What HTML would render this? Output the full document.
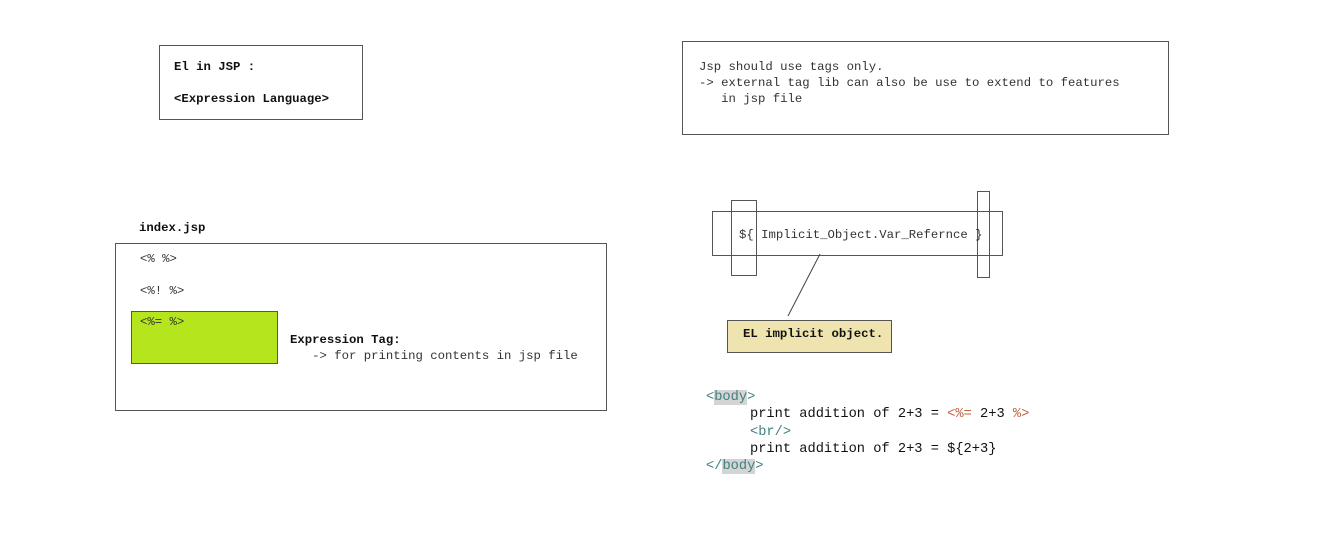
<!DOCTYPE html>
<html><head><meta charset="utf-8"><style>
body{margin:0;width:1339px;height:552px;background:#fff;position:relative;overflow:hidden;font-family:"Liberation Mono",monospace;font-size:12.3px;color:#333}
.b{position:absolute;border:1px solid #555;box-sizing:border-box}
.t{position:absolute;white-space:pre;line-height:16px}
.bold{font-weight:bold;color:#111}
.c{position:absolute;white-space:pre;font-size:13.7px;line-height:17.3px;color:#111;left:706px;top:389px}
.tg{color:#3f7f7f}.hl{background:#d4d4d4}.sc{color:#bf5f3f}
.in{display:inline-block;width:44px}
</style></head><body>
<div class="b" style="left:159px;top:45px;width:204px;height:75px"></div>
<div class="t bold" style="left:174px;top:59px">El in JSP :

&lt;Expression Language&gt;</div>

<div class="b" style="left:682px;top:41px;width:487px;height:94px"></div>
<div class="t" style="left:699px;top:59px">Jsp should use tags only.
-&gt; external tag lib can also be use to extend to features
   in jsp file</div>

<div class="t bold" style="left:139px;top:220px">index.jsp</div>
<div class="b" style="left:115px;top:243px;width:492px;height:168px"></div>
<div class="t" style="left:140px;top:251px">&lt;% %&gt;</div>
<div class="t" style="left:140px;top:283px">&lt;%! %&gt;</div>
<div class="b" style="left:131px;top:311px;width:147px;height:53px;background:#b5e61d"></div>
<div class="t" style="left:140px;top:314px">&lt;%= %&gt;</div>
<div class="t" style="left:290px;top:332px"><span class="bold">Expression Tag:</span>
   -&gt; for printing contents in jsp file</div>

<div class="b" style="left:712px;top:211px;width:291px;height:45px"></div>
<div class="b" style="left:731px;top:200px;width:26px;height:76px"></div>
<div class="b" style="left:977px;top:191px;width:13px;height:87px"></div>
<div class="t" style="left:739px;top:227px">${ Implicit_Object.Var_Refernce }</div>
<svg style="position:absolute;left:0;top:0" width="1339" height="552"><line x1="820" y1="254" x2="788" y2="316" stroke="#444" stroke-width="1"/></svg>
<div class="b" style="left:727px;top:320px;width:165px;height:33px;background:#efe4b0"></div>
<div class="t bold" style="left:743px;top:326px">EL implicit object.</div>

<div class="c"><span class="tg">&lt;<span class="hl">body</span>&gt;</span>
<span class="in"></span>print addition of 2+3 = <span class="sc">&lt;%=</span> 2+3 <span class="sc">%&gt;</span>
<span class="in"></span><span class="tg">&lt;br/&gt;</span>
<span class="in"></span>print addition of 2+3 = ${2+3}
<span class="tg">&lt;/<span class="hl">body</span>&gt;</span></div>
</body></html>
